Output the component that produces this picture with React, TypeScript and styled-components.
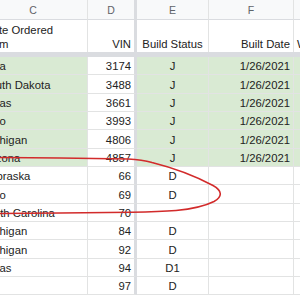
import React from "react";
import styled, { createGlobalStyle } from "styled-components";

const Global = createGlobalStyle`
  html, body { margin: 0; padding: 0; background: #ffffff; }
  body {
    width: 300px;
    height: 300px;
    overflow: hidden;
    font-family: "Liberation Sans", Arial, sans-serif;
  }
`;

type Col = "c" | "d" | "e" | "f" | "g";
type Align = "left" | "center" | "right";

const widths: Record<Col, number> = { c: 110, d: 49, e: 72, f: 85, g: 60 };
const justify: Record<Align, string> = {
  left: "flex-start",
  center: "center",
  right: "flex-end",
};

const Viewport = styled.div`
  position: relative;
  width: 300px;
  height: 300px;
  overflow: hidden;
`;

const Sheet = styled.div`
  display: flex;
  flex-direction: column;
  margin-left: -22px;
  width: 400px;
`;

const Row = styled.div<{ $h: number; $frozen?: boolean }>`
  display: flex;
  flex-shrink: 0;
  box-sizing: border-box;
  height: ${(p) => p.$h}px;
  border-bottom: ${(p) => (p.$frozen ? "5px solid #dadce0" : "none")};
`;

const BaseCell = styled.div<{ $col: Col; $align?: Align }>`
  box-sizing: border-box;
  flex-shrink: 0;
  width: ${(p) => widths[p.$col]}px;
  display: flex;
  justify-content: ${(p) => justify[p.$align || "left"]};
  padding: 0 3px 0 ${(p) => (p.$col === "c" ? 4 : 3)}px;
  border-right: ${(p) =>
    p.$col === "d" ? "3px solid #dadce0" : "1px solid #e2e3e3"};
  white-space: nowrap;
  overflow: hidden;
`;

const LetterCell = styled(BaseCell)`
  align-items: center;
  background: #f8f9fa;
  border-bottom: 1px solid #dadce0;
  color: #5f6368;
  font-size: 10.5px;
`;

const TitleCell = styled(BaseCell)`
  align-items: flex-end;
  background: #ffffff;
  color: #222222;
  font-size: 11.3px;
  line-height: 14px;
  padding-bottom: 1px;
  text-align: ${(p) => p.$align || "left"};
`;

const DataCell = styled(BaseCell)<{ $green?: boolean }>`
  align-items: center;
  padding-top: 1px;
  background: ${(p) => (p.$green ? "#d9ead3" : "#ffffff")};
  border-bottom: 1px solid #e2e3e3;
  color: #222222;
  font-size: 11.3px;
`;

const Scribble = styled.svg`
  position: absolute;
  left: 0;
  top: 0;
  pointer-events: none;
`;

type Entry = { c: string; d: string; e: string; f: string; green?: boolean };

const rows: Entry[] = [
  { c: "Iowa", d: "3174", e: "J", f: "1/26/2021", green: true },
  { c: "South Dakota", d: "3488", e: "J", f: "1/26/2021", green: true },
  { c: "Texas", d: "3661", e: "J", f: "1/26/2021", green: true },
  { c: "Ohio", d: "3993", e: "J", f: "1/26/2021", green: true },
  { c: "Michigan", d: "4806", e: "J", f: "1/26/2021", green: true },
  { c: "Arizona", d: "4857", e: "J", f: "1/26/2021", green: true },
  { c: "Nebraska", d: "66", e: "D", f: "" },
  { c: "Ohio", d: "69", e: "D", f: "" },
  { c: "North Carolina", d: "70", e: "", f: "" },
  { c: "Michigan", d: "84", e: "D", f: "" },
  { c: "Michigan", d: "92", e: "D", f: "" },
  { c: "Texas", d: "94", e: "D1", f: "" },
  { c: "", d: "97", e: "D", f: "" },
];

export default function App() {
  return (
    <Viewport>
      <Global />
      <Sheet>
        <Row $h={20}>
          <LetterCell $col="c" $align="center">C</LetterCell>
          <LetterCell $col="d" $align="center">D</LetterCell>
          <LetterCell $col="e" $align="center">E</LetterCell>
          <LetterCell $col="f" $align="center">F</LetterCell>
          <LetterCell $col="g" $align="center">G</LetterCell>
        </Row>
        <Row $h={37} $frozen>
          <TitleCell $col="c">
            State Ordered
            <br />
            From
          </TitleCell>
          <TitleCell $col="d" $align="right">VIN</TitleCell>
          <TitleCell $col="e" $align="center">Build Status</TitleCell>
          <TitleCell $col="f" $align="right">Built Date</TitleCell>
          <TitleCell $col="g">Week</TitleCell>
        </Row>
        {rows.map((r, i) => (
          <Row key={i} $h={18.35}>
            <DataCell $col="c" $green={r.green}>{r.c}</DataCell>
            <DataCell $col="d" $align="right">{r.d}</DataCell>
            <DataCell $col="e" $align="center" $green={r.green}>{r.e}</DataCell>
            <DataCell $col="f" $align="right" $green={r.green}>{r.f}</DataCell>
            <DataCell $col="g" $green={r.green} />
          </Row>
        ))}
      </Sheet>
      <Scribble width="300" height="300" viewBox="0 0 300 300">
        <path
          d="M -2 157.5 L 60 158 L 128 159 C 138 159.5 145 160.5 152 162.5 C 176 168.5 198 177.5 213 185.5 C 222 190.5 223 196.5 214 201.5 C 205 206 192 209 176 210.5 C 160 211.8 146 212 132 212.2 L 60 213 L -2 213.5"
          fill="none"
          stroke="#d22b2b"
          strokeWidth="1.6"
          strokeLinecap="round"
          strokeLinejoin="round"
        />
      </Scribble>
    </Viewport>
  );
}
